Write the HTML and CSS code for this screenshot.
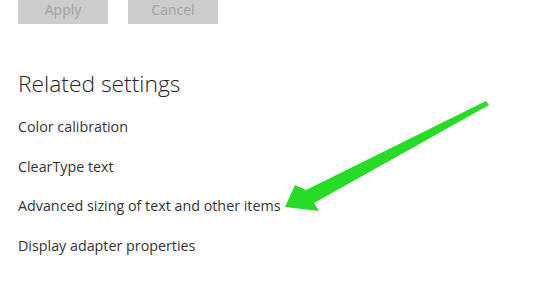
FILE: index.html
```html
<!DOCTYPE html>
<html>
<head>
<meta charset="utf-8">
<link rel="stylesheet" href="styles.css">
</head>
<body>
<div class="page">
  <div class="buttons">
    <div class="btn">Apply</div>
    <div class="btn">Cancel</div>
  </div>
  <h2 class="title">Related settings</h2>
  <ul class="links">
    <li>Color calibration</li>
    <li>ClearType text</li>
    <li>Advanced sizing of text and other items</li>
    <li>Display adapter properties</li>
  </ul>
</div>
<svg class="arrow" width="534" height="281" viewBox="0 0 534 281">
  <polygon points="285,207 295,185 306,190 486,101 489,105 314,203 319,211" fill="#26dc26"/>
</svg>
</body>
</html>
```
FILE: styles.css
```css
html, body {
  margin: 0;
  padding: 0;
  background: #ffffff;
  width: 534px;
  height: 281px;
  overflow: hidden;
}
.page {
  padding-left: 18px;
  font-family: "Open Sans", "Noto Sans", sans-serif;
  color: #333333;
}
.buttons {
  display: flex;
  gap: 20px;
  margin-top: -8px;
}
.btn {
  width: 90px;
  height: 32px;
  background: #cccccc;
  color: #a3a3a3;
  font-size: 14px;
  display: flex;
  align-items: center;
  justify-content: center;
  padding-top: 3px;
  box-sizing: border-box;
}
.title {
  margin: 45px 0 0 0;
  font-size: 22.8px;
  font-weight: 300;
  color: #222222;
  line-height: 30px;
}
.links {
  list-style: none;
  margin: 18px 0 0 0;
  padding: 0;
  display: flex;
  flex-direction: column;
  gap: 19.7px;
}
.links li {
  font-size: 14.3px;
  line-height: 20px;
}
.arrow {
  position: absolute;
  left: 0;
  top: 0;
}
```
